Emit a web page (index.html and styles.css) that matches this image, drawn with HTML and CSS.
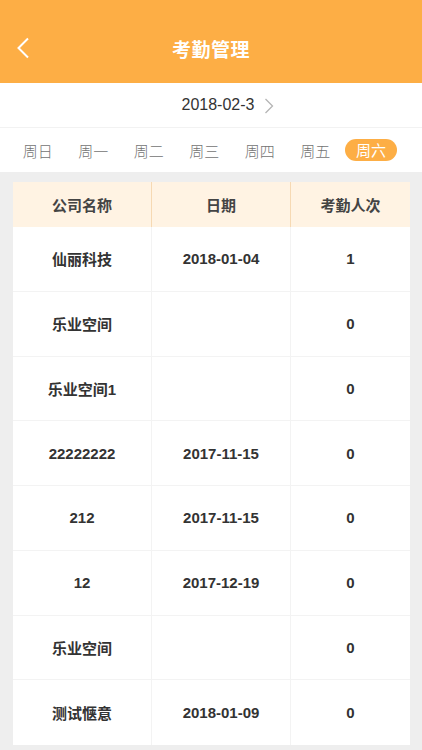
FILE: index.html
```html
<!DOCTYPE html>
<html lang="zh">
<head>
<meta charset="utf-8">
<title>考勤管理</title>
<link rel="stylesheet" href="styles.css">
</head>
<body>
<div class="page">
  <header class="topbar">
    <svg class="back" width="14" height="22" viewBox="0 0 14 22"><path d="M12 1.5 L2.5 11 L12 20.5" fill="none" stroke="#fff" stroke-width="2"/></svg>
    <h1 class="title">考勤管理</h1>
  </header>
  <div class="daterow">
    <span class="date">2018-02-3</span>
    <svg class="next" width="10" height="16" viewBox="0 0 10 16"><path d="M1.5 1 L8.5 8 L1.5 15" fill="none" stroke="#b5b5b5" stroke-width="1.3"/></svg>
  </div>
  <nav class="weekrow">
    <span class="day">周日</span>
    <span class="day">周一</span>
    <span class="day">周二</span>
    <span class="day">周三</span>
    <span class="day">周四</span>
    <span class="day">周五</span>
    <span class="day active">周六</span>
  </nav>
  <main class="content">
    <div class="table">
      <div class="row head">
        <div class="cell">公司名称</div><div class="cell">日期</div><div class="cell">考勤人次</div>
      </div>
      <div class="row"><div class="cell">仙丽科技</div><div class="cell">2018-01-04</div><div class="cell">1</div></div>
      <div class="row"><div class="cell">乐业空间</div><div class="cell"></div><div class="cell">0</div></div>
      <div class="row"><div class="cell">乐业空间1</div><div class="cell"></div><div class="cell">0</div></div>
      <div class="row"><div class="cell">22222222</div><div class="cell">2017-11-15</div><div class="cell">0</div></div>
      <div class="row"><div class="cell">212</div><div class="cell">2017-11-15</div><div class="cell">0</div></div>
      <div class="row"><div class="cell">12</div><div class="cell">2017-12-19</div><div class="cell">0</div></div>
      <div class="row"><div class="cell">乐业空间</div><div class="cell"></div><div class="cell">0</div></div>
      <div class="row"><div class="cell">测试惬意</div><div class="cell">2018-01-09</div><div class="cell">0</div></div>
    </div>
  </main>
</div>
</body>
</html>
```
FILE: styles.css
```css
* { box-sizing: border-box; margin: 0; padding: 0; }
html, body { width: 422px; height: 750px; overflow: hidden; }
body {
  background: #eeeeee;
  font-family: "Liberation Sans", Arial, "Noto Sans CJK SC", sans-serif;
  color: #333;
}
.page { display: flex; flex-direction: column; height: 750px; }
.topbar {
  height: 83px;
  background: #fdae45;
  display: flex;
  align-items: center;
  justify-content: center;
  position: relative;
  padding-top: 14px;
}
.back { position: absolute; left: 16px; top: 37px; }
.title {
  color: #fff;
  font-size: 19px;
  font-weight: bold;
  font-family: "Noto Sans CJK SC", sans-serif;
  letter-spacing: 0.5px;
}
.daterow {
  height: 45px;
  background: #fff;
  border-bottom: 1px solid #f2f2f2;
  display: flex;
  align-items: center;
  justify-content: center;
  gap: 10px;
  padding-left: 34px;
}
.date { font-size: 16px; color: #333; }
.next { margin-top: 1px; }
.weekrow {
  height: 44px;
  background: #fff;
  display: flex;
  align-items: center;
  padding-left: 10px;
}
.day {
  width: 55.5px;
  text-align: center;
  font-size: 15px;
  color: #737373;
  font-family: "Noto Sans CJK SC", sans-serif;
  font-weight: 300;
  line-height: 21px;
}
.day.active {
  width: 52px;
  margin-left: 2px;
  height: 22px;
  border-radius: 11px;
  background: #fdae45;
  color: #fff;
  font-weight: 400;
}
.content { flex: 1; padding: 10px 12px 0 13px; }
.table { background: #fff; }
.row { display: grid; grid-template-columns: 139px 139px 1fr; height: 64.75px; border-bottom: 1px solid #f3f3f3; }
.row:last-child { border-bottom: none; }
.row.head { height: 45px; background: #fff3e3; border-bottom: none; }
.cell {
  display: flex;
  align-items: center;
  justify-content: center;
  font-size: 15px;
  font-weight: bold;
  color: #333;
  border-right: 1px solid #f3f3f3;
}
.cell:last-child { border-right: none; }
.head .cell {
  border-right-color: #f6d9b3;
  font-family: "Noto Sans CJK SC", sans-serif;
  font-size: 15px;
  color: #444;
}
.head .cell:last-child { border-right: none; }
```
